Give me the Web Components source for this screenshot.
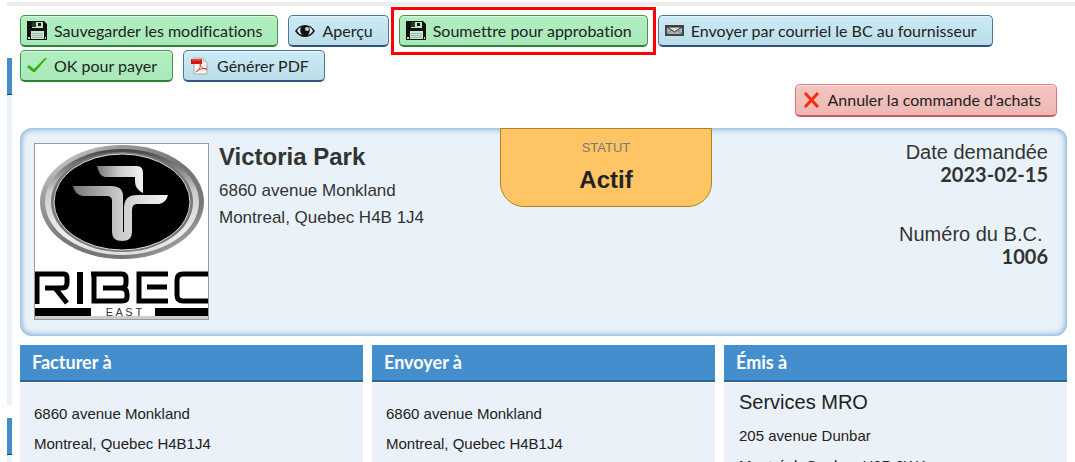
<!DOCTYPE html>
<html lang="fr">
<head>
<meta charset="utf-8">
<title>Bon de commande</title>
<style>
html, body{
   margin:0;
   height:100%;
   overflow:hidden;
   background:white;
}
</style>
</head>
<body>

<po-page>
   <po-rail slot="rail"></po-rail>
   <po-toolbar>
      <po-button kind="green" icon="save">Sauvegarder les modifications</po-button>
      <po-button kind="blue" icon="eye">Aperçu</po-button>
      <po-button kind="green" icon="save" marked>Soumettre pour approbation</po-button>
      <po-button kind="blue" icon="mail">Envoyer par courriel le BC au fournisseur</po-button>
      <po-button kind="green" icon="check">OK pour payer</po-button>
      <po-button kind="blue" icon="pdf">Générer PDF</po-button>
      <po-button slot="end" kind="red" icon="cross">Annuler la commande d'achats</po-button>
   </po-toolbar>
   <po-summary>
      <ribec-logo slot="logo"></ribec-logo>
      <span slot="name">Victoria Park</span>
      <span slot="street">6860 avenue Monkland</span>
      <span slot="city">Montreal, Quebec H4B 1J4</span>
      <po-status slot="status" label="STATUT">Actif</po-status>
      <po-fact slot="facts" label="Date demandée">2023-02-15</po-fact>
      <po-fact slot="facts" label="Numéro du B.C.&nbsp;">1006</po-fact>
   </po-summary>
   <po-columns>
      <po-panel heading="Facturer à">
	 <po-line>6860 avenue Monkland</po-line>
	 <po-line>Montreal, Quebec H4B1J4</po-line>
      </po-panel>
      <po-panel heading="Envoyer à">
	 <po-line>6860 avenue Monkland</po-line>
	 <po-line>Montreal, Quebec H4B1J4</po-line>
      </po-panel>
      <po-panel heading="Émis à" company="Services MRO">
	 <po-line>205 avenue Dunbar</po-line>
	 <po-line>Montréal, Quebec H3P 2W4</po-line>
      </po-panel>
   </po-columns>
</po-page>

<script>
const icons = {
   save: `<svg width="20" height="20" viewBox="0 0 20 20">
      <path d="M0 0h17l3 3v16H0z" fill="#111"/>
      <path d="M5 1h11v6H5z" fill="#b9e6c5"/><path d="M5 1h4v5H5z" fill="#333"/><path d="M11 2h3v3h-3z" fill="#111"/>
      <path d="M4 10h13v8H4z" fill="#c5ebd0"/><path d="M5 12.500h11M5 14.500h11M5 16.500h11" stroke="#9db8a5"/>
      <path d="M1 16h2v2H1zM18 16h1v2h-1z" fill="#a9e9bb"/></svg>`,
   eye: `<svg width="20" height="20" viewBox="0 0 20 20">
      <path d="M0 10Q4 4 10 4t10 6q-4 6-10 6T0 10z" fill="#111"/>
      <path d="M2 10q1-3 4-4-2 4 1 8-3-1-5-4zM18 10q-1-3-4-4 2 4-1 8 3-1 5-4z" fill="#d4e9f0"/>
      <circle cx="12" cy="8" r="2" fill="#b8d4df"/></svg>`,
   mail: `<svg width="19" height="20" viewBox="0 0 19 20">
      <path d="M1 5h17v9H1z" fill="#aab0b3" stroke="#444" stroke-width="2"/>
      <path d="M2 6h15l-7.500 5z" fill="#d8dcde" stroke="#333"/><path d="M2 13l5-4M17 13l-5-4" stroke="#777"/></svg>`,
   check: `<svg width="20" height="20" viewBox="0 0 20 20">
      <path d="M0 11l2-2 5 4L18 2h2L8 16H6z" fill="#35ad11"/></svg>`,
   pdf: `<svg width="20" height="20" viewBox="0 0 20 20">
      <path d="M4 2h9l4 4v12H4z" fill="#f3f3f3" stroke="#aaa"/><path d="M13 2v4h4z" fill="#ccc"/>
      <path d="M1 3h11v5H1z" fill="#d51515"/><path d="M2 4h9" stroke="#f06a5c"/>
      <path d="M6 16c4-3 5-6 4-9 0 4 3 6 7 6-4-1-8 0-11 3z" fill="none" stroke="#cf3a33"/></svg>`,
   cross: `<svg width="18" height="20" viewBox="0 0 18 20">
      <path d="M3 3l13 14M16 3L3 17" stroke="#f52d12" stroke-width="3"/></svg>`
}

customElements.define('po-page',
   class extends HTMLElement {
   constructor(){super(); this.attachShadow({mode:'open'});
      this.shadowRoot.innerHTML = `
<style>
:host{
   display:flex;
   gap:8px;
   padding:2px 0 0 7px;
   font-family:"Liberation Sans", Arial, sans-serif;
   color:#333;
}
.body{
   display:flex;
   flex-direction:column;
   flex:1;
   min-width:0;
}
.top{
   height:4px;
   background:#eee;
}
.content{
   display:flex;
   gap:8px;
}
main{
   display:flex;
   flex-direction:column;
   flex:1;
   min-width:0;
   padding:9px 8px 0 0;
}
</style>
<div class="body">
   <div class="top"></div>
   <div class="content">
      <slot name="rail"></slot>
      <main><slot></slot></main>
   </div>
</div>`;
   }
})

// slice of the side menu that stays visible on the left
customElements.define('po-rail',
   class extends HTMLElement {
   constructor(){super(); this.attachShadow({mode:'open'});
      this.shadowRoot.innerHTML = `
<style>
:host{
   display:flex;
   flex-direction:column;
   gap:13px;
   width:5px;
   padding-top:52px;
}
.head{
   height:36px;
   background:#448ecd;
   border-bottom:1px solid #163c66;
}
.fill{
   height:310px;
   background:#eaf1f8;
}
</style>
<div><div class="head"></div><div class="fill"></div></div>
<div><div class="head"></div><div class="fill"></div></div>`;
   }
})

customElements.define('po-toolbar',
   class extends HTMLElement {
   constructor(){super(); this.attachShadow({mode:'open'});
      this.shadowRoot.innerHTML = `
<style>
:host{ display:block; }
.start{
   display:flex;
   flex-wrap:wrap;
   gap:3px 10px;
}
.end{
   display:flex;
   justify-content:flex-end;
   padding:2px 10px 0 0;
}
</style>
<div class="start"><slot></slot></div>
<div class="end"><slot name="end"></slot></div>`;
   }
})

customElements.define('po-button',
   class extends HTMLElement {
   constructor(){super(); this.attachShadow({mode:'open'});
      this.shadowRoot.innerHTML = `
<style>
:host{ display:block; }
button{
   display:flex;
   align-items:center;
   gap:7px;
   height:32px;
   margin:0;
   padding:0 15px 0 6px;
   border:1px solid;
   border-bottom-width:2px;
   border-radius:5px;
   box-shadow:inset 0 1px 1px rgba(255,255,255,.6);
   font:16px/20px Lato, sans-serif;
   font-variant-ligatures:none;
   color:#222;
   white-space:nowrap;
}
svg{ display:block; }
:host([kind=green]) button{
   background:linear-gradient(#b0efc0, #a9e9b9);
   border-color:#3f9a45 #3f9a45 #2b8131;
}
:host([kind=blue]) button{
   background:linear-gradient(#cbecf7, #bbdde8);
   border-color:#4f7499 #4f7499 #2f557f;
}
:host([kind=red]) button{
   height:33px;
   background:linear-gradient(#f4c5c1, #eeb8b4);
   border-color:#dd8486 #d67478 #c9595e;
}
:host([marked]){
   outline:3px solid #f00;
   outline-offset:5px;
}
</style>
<button type="button">${icons[this.getAttribute("icon")]}<span><slot></slot></span></button>`;
   }
})

customElements.define('po-summary',
   class extends HTMLElement {
   constructor(){super(); this.attachShadow({mode:'open'});
      this.shadowRoot.innerHTML = `
<style>
:host{
   display:grid;
   grid-template-columns:480fr 212fr 355fr;
   align-items:start;
   min-height:208px;
   margin-top:11px;
   border-radius:12px;
   background:#eaf2f9;
   box-shadow:inset 0 0 6px 1px #6ea5d2;
}
.who{
   display:flex;
   gap:10px;
   padding:15px 0 0 14px;
}
h1{
   margin:0 0 6px;
   font-size:24px;
   line-height:28px;
}
p{
   margin:0;
   font-size:17px;
   line-height:27px;
}
.facts{
   display:flex;
   flex-direction:column;
   gap:38px;
   padding:13px 19px 0 0;
}
</style>
<div class="who">
   <slot name="logo"></slot>
   <div>
      <h1><slot name="name"></slot></h1>
      <p><slot name="street"></slot></p>
      <p><slot name="city"></slot></p>
   </div>
</div>
<slot name="status"></slot>
<div class="facts"><slot name="facts"></slot></div>`;
   }
})

customElements.define('po-status',
   class extends HTMLElement {
   constructor(){super(); this.attachShadow({mode:'open'});
      this.shadowRoot.innerHTML = `
<style>
:host{
   display:block;
   padding:9px 0 10px;
   border:1px solid #ab8520;
   border-radius:0 0 24px 24px;
   background:#ffc565;
   text-align:center;
}
small{
   display:block;
   font-size:13px;
   line-height:20px;
   color:#777;
}
strong{
   display:block;
   margin-top:6px;
   font-size:24px;
   line-height:32px;
   color:#222;
}
</style>
<small>${this.getAttribute("label")}</small>
<strong><slot></slot></strong>`;
   }
})

customElements.define('po-fact',
   class extends HTMLElement {
   constructor(){super(); this.attachShadow({mode:'open'});
      this.shadowRoot.innerHTML = `
<style>
:host{
   display:block;
   text-align:right;
   font-size:20px;
   line-height:22px;
}
div{ white-space:nowrap; }
strong{
   display:block;
   font-family:Lato, sans-serif;
}
</style>
<div>${this.getAttribute("label")}</div>
<strong><slot></slot></strong>`;
   }
})

customElements.define('po-columns',
   class extends HTMLElement {
   constructor(){super(); this.attachShadow({mode:'open'});
      this.shadowRoot.innerHTML = `
<style>
:host{
   display:grid;
   grid-template-columns:repeat(3, 1fr);
   gap:9px;
   margin-top:9px;
}
</style>
<slot></slot>`;
   }
})

customElements.define('po-panel',
   class extends HTMLElement {
   constructor(){super(); this.attachShadow({mode:'open'});
      const company = this.getAttribute("company");
      this.shadowRoot.innerHTML = `
<style>
:host{
   display:block;
   background:#eaf1f8;
}
h2{
   margin:0;
   padding:0 12px;
   border-bottom:2px solid #2b669f;
   box-shadow:0 1px white;
   background:#448ecd;
   font:bold 18px/35px Lato, sans-serif;
   color:white;
}
.lines{
   padding:17px 14px;
   color:#222;
}
h3{
   margin:0;
   font-size:20px;
   font-weight:normal;
   line-height:30px;
}
.company{ padding:5px 15px 14px; }
.company h3{ margin-bottom:4px; }
</style>
<h2>${this.getAttribute("heading")}</h2>
<div class="lines ${company ? "company" : ""}">
   ${company ? `<h3>${company}</h3>` : ""}
   <slot></slot>
</div>`;
   }
})

customElements.define('po-line',
   class extends HTMLElement {
   constructor(){super(); this.attachShadow({mode:'open'});
      this.shadowRoot.innerHTML = `
<style>
:host{
   display:block;
   font-size:15px;
   line-height:30px;
}
</style>
<slot></slot>`;
   }
})

customElements.define('ribec-logo',
   class extends HTMLElement {
   constructor(){super(); this.attachShadow({mode:'open'});
      this.shadowRoot.innerHTML = `
<style>
:host{
   display:block;
   flex:none;
   border:1px solid #999;
   background:white;
}
svg{ display:block; }
</style>
<svg width="173" height="175" viewBox="0 0 173 175" role="img" aria-label="Ribec East">
   <defs>
      <linearGradient id="rim" x1="0" y1="0" x2="1" y2="1">
	 <stop offset="0" stop-color="#eee"/><stop offset=".25" stop-color="#999"/>
	 <stop offset=".5" stop-color="#777"/><stop offset=".75" stop-color="#777"/><stop offset="1" stop-color="#ccc"/>
      </linearGradient>
      <linearGradient id="inner" x1="0" y1="0" x2="0" y2="1">
	 <stop offset="0" stop-color="#444"/><stop offset=".4" stop-color="#ccc"/>
	 <stop offset=".8" stop-color="#eee"/><stop offset="1" stop-color="#ddd"/>
      </linearGradient>
      <linearGradient id="bar" x1="0" y1="0" x2="1" y2="0">
	 <stop offset="0" stop-color="#777"/><stop offset=".5" stop-color="#ccc"/><stop offset="1" stop-color="#f4f4f4"/>
      </linearGradient>
   </defs>
   <ellipse cx="87" cy="58" rx="82" ry="57" fill="url(#rim)"/>
   <ellipse cx="87" cy="58" rx="77" ry="53" fill="url(#inner)"/>
   <ellipse cx="87" cy="58" rx="71" ry="50" fill="#777"/>
   <ellipse cx="87" cy="58" rx="68" ry="48" fill="#000" stroke="#ddd"/>
   <path d="M62 22h40q6 0 6 7v20q-8-4-8-11v-5H70q-6-1-8-11z" fill="url(#bar)"/>
   <path d="M38 42h38q12 0 12 10v36h1V64q0-13 13-13h31q-2 8-9 9h-22q-5 0-5 6v22q0 9-10 9t-10-9V57q0-5-5-5H48q-8-1-10-10z" fill="url(#bar)"/>
   <g fill="none" stroke="#000" stroke-width="5">
      <path d="M0 130h29q3 0 3 4v5q0 5-5 5H10M2 128v32M20 144l12 15"/>
      <path d="M45 128v32" stroke-width="6"/>
      <path d="M56 130h31q4 0 4 5v4q0 5-5 5H68M86 144q6 0 6 6v3q0 4-5 4H59v-28"/>
      <path d="M133 130h-29v27h29M112 143h20"/>
      <path d="M173 130h-25q-6 0-6 6v15q0 6 6 6h25"/>
   </g>
   <path d="M0 164h56v8H0zM120 164h53v8h-53z"/>
   <path d="M0 172h173v3H0z" fill="#ccc"/>
   <text x="89" y="172" font-family="Liberation Sans, sans-serif" font-size="11" fill="#333" text-anchor="middle" xml:space="preserve">E A S T</text>
</svg>`;
   }
})
</script>
</body>
</html>
